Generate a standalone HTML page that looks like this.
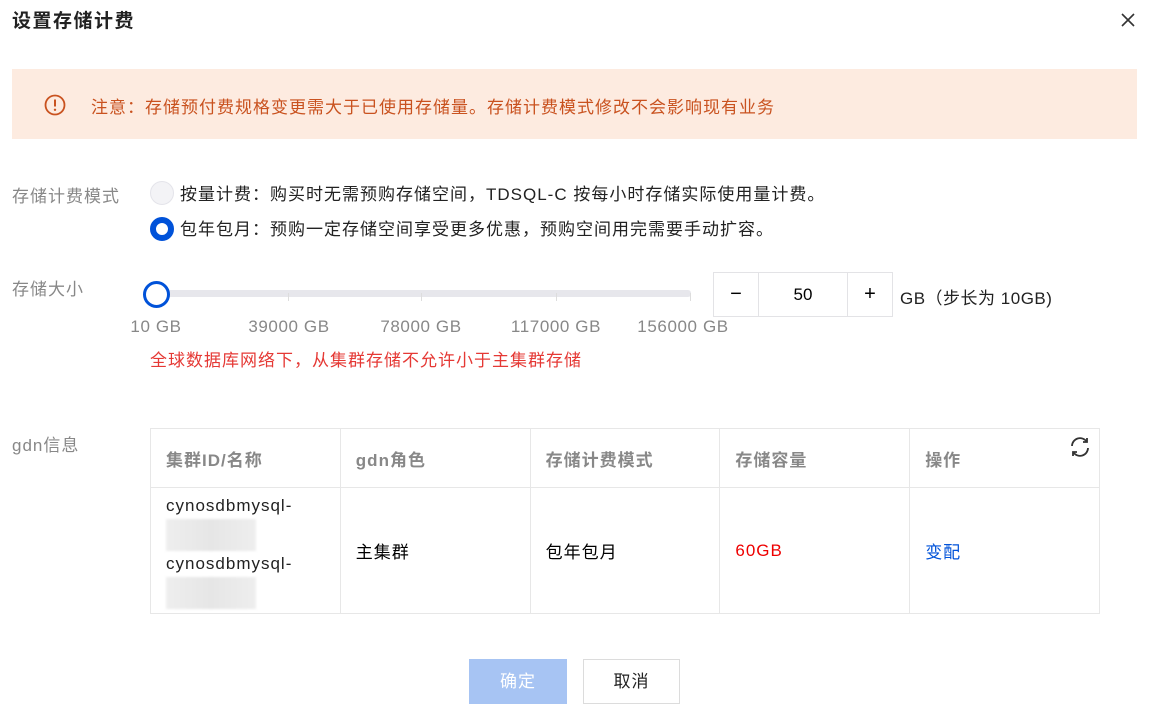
<!DOCTYPE html>
<html><head><meta charset="utf-8"><style>
*{margin:0;padding:0;box-sizing:border-box}
body{width:1150px;height:718px;background:#fff;font-family:"Liberation Sans","Noto Sans CJK SC",sans-serif;font-size:17px;letter-spacing:1px;color:#000;position:relative;overflow:hidden}
.a{position:absolute;white-space:nowrap}
.lbl{color:#888}
.tl{position:absolute;font-size:17px;letter-spacing:0.6px;color:#888;transform:translateX(-50%)}
.tick{position:absolute;top:293px;width:1px;height:8px;background:#ddd}
table{border-collapse:collapse;position:absolute;left:150px;top:428px;width:950px;table-layout:fixed}
td,th{border:1px solid #e7e7e7;text-align:left;padding:0 15px;font-size:17px;vertical-align:middle}
th{height:59px;color:#888;font-weight:bold}
td{height:126px}
.blur{display:block;width:90px;height:32px;background:linear-gradient(90deg,#eee,#e6e6e6,#eee);filter:blur(1px)}
</style></head><body>
<div class="a" style="left:12px;top:6px;font-size:19px;letter-spacing:1.5px;font-weight:bold;color:#222">设置存储计费</div>
<svg class="a" style="left:1120px;top:12px" width="16" height="16" viewBox="0 0 16 16"><path d="M2 2L14 14M14 2L2 14" stroke="#333" stroke-width="1.6"/></svg>
<div class="a" style="left:12px;top:69px;width:1125px;height:70px;background:#fdebe0"></div>
<svg class="a" style="left:44px;top:94px" width="22" height="22" viewBox="0 0 22 22"><circle cx="11" cy="11" r="9.5" fill="none" stroke="#c9521f" stroke-width="1.8"/><path d="M11 5.5V12.5" stroke="#c9521f" stroke-width="2"/><circle cx="11" cy="15.8" r="1.2" fill="#c9521f"/></svg>
<div class="a" style="left:91px;top:93px;color:#c9521f">注意：存储预付费规格变更需大于已使用存储量。存储计费模式修改不会影响现有业务</div>

<div class="a lbl" style="left:12px;top:182px">存储计费模式</div>
<div class="a" style="left:150px;top:181px;width:24px;height:24px;border-radius:50%;background:#f3f3f6;border:1px solid #e4e4ea"></div>
<div class="a" style="left:180px;top:180px;color:#222">按量计费：购买时无需预购存储空间，TDSQL-C 按每小时存储实际使用量计费。</div>
<div class="a" style="left:150px;top:217px;width:24px;height:24px;border-radius:50%;border:6px solid #0052d9;background:#fff"></div>
<div class="a" style="left:180px;top:215px;color:#222">包年包月：预购一定存储空间享受更多优惠，预购空间用完需要手动扩容。</div>

<div class="a lbl" style="left:12px;top:275px">存储大小</div>
<div class="a" style="left:157px;top:290px;width:534px;height:7px;background:#e7e7ec;border-radius:3px"></div>
<div class="tick" style="left:288px"></div><div class="tick" style="left:421px"></div><div class="tick" style="left:556px"></div><div class="tick" style="left:690px"></div>
<div class="a" style="left:143px;top:281px;width:27px;height:27px;border-radius:50%;border:3px solid #0052d9;background:#fff"></div>
<div class="tl" style="left:156px;top:317px">10 GB</div>
<div class="tl" style="left:289px;top:317px">39000 GB</div>
<div class="tl" style="left:421px;top:317px">78000 GB</div>
<div class="tl" style="left:556px;top:317px">117000 GB</div>
<div class="tl" style="left:683px;top:317px">156000 GB</div>
<div class="a" style="left:150px;top:346px;color:#e53935">全球数据库网络下，从集群存储不允许小于主集群存储</div>

<div class="a" style="left:713px;top:272px;width:180px;height:45px;border:1px solid #e3e3e6;display:flex;letter-spacing:0">
<div style="width:45px;border-right:1px solid #e3e3e6;text-align:center;line-height:43px;font-size:20px">−</div>
<div style="width:89px;border-right:1px solid #e3e3e6;text-align:center;line-height:43px">50</div>
<div style="flex:1;text-align:center;line-height:43px;font-size:20px">+</div></div>
<div class="a" style="left:900px;top:284px;color:#222;letter-spacing:0.5px">GB（步长为 10GB)</div>

<div class="a lbl" style="left:12px;top:431px">gdn信息</div>
<table><tr><th>集群ID/名称</th><th>gdn角色</th><th>存储计费模式</th><th>存储容量</th><th>操作</th></tr>
<tr><td style="line-height:26px;color:#222">cynosdbmysql-<span class="blur"></span>cynosdbmysql-<span class="blur"></span></td><td>主集群</td><td>包年包月</td><td style="color:#e00">60GB</td><td style="color:#0052d9">变配</td></tr></table>
<svg class="a" style="left:1068px;top:435px" width="24" height="24" viewBox="0 0 24 24" fill="none" stroke="#333" stroke-width="1.8"><path d="M4 11A8 8 0 0 1 18.5 6.5M20 13A8 8 0 0 1 5.5 17.5"/><path d="M19 3V7H15M5 21V17H9"/></svg>

<div class="a" style="left:469px;top:659px;width:98px;height:45px;background:#a7c4f3;color:#fff;text-align:center;line-height:45px">确定</div>
<div class="a" style="left:583px;top:659px;width:97px;height:45px;border:1px solid #dcdcdc;text-align:center;line-height:43px;color:#222">取消</div>
</body></html>
